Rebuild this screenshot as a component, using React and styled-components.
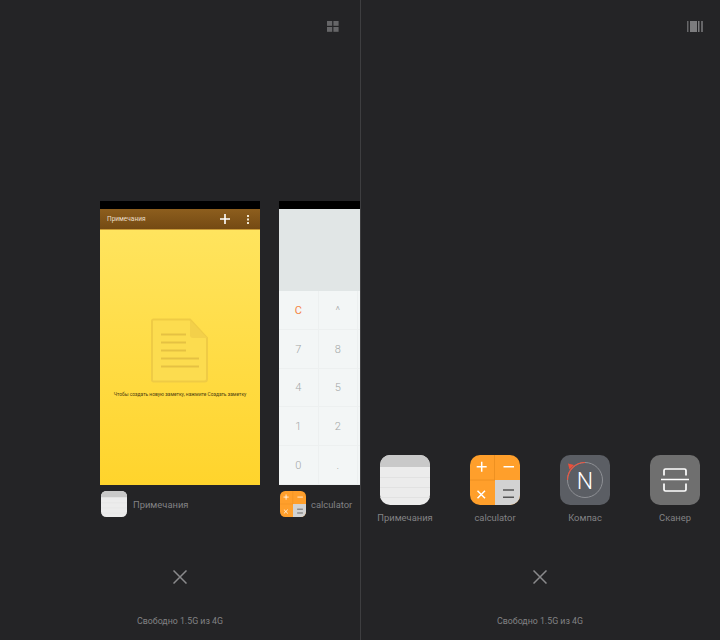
import React from "react";
import styled, { createGlobalStyle } from "styled-components";

const Global = createGlobalStyle`
  html, body { margin: 0; padding: 0; background: #242426; }
  body { font-family: Roboto, "Liberation Sans", sans-serif; }
`;

const Screen = styled.div`
  display: flex;
  width: 720px;
  height: 640px;
  overflow: hidden;
  background: #242426;
`;

const Panel = styled.section`
  position: relative;
  display: flex;
  flex-direction: column;
  width: 360px;
  height: 640px;
  flex: none;
  overflow: hidden;
  box-shadow: ${(p) => (p.$divided ? "inset 1px 0 0 #3e3e40" : "none")};
`;

const TopBar = styled.div`
  display: flex;
  justify-content: flex-end;
  align-items: flex-start;
  height: 21px;
  padding: 21px ${(p) => p.$inset}px 0 0;
  color: #666668;
  svg { display: block; }
`;

const Carousel = styled.div`
  display: flex;
  gap: 19px;
  margin-top: 159px;
  padding-left: 100px;
`;

const Task = styled.div`
  display: flex;
  flex-direction: column;
  flex: none;
  width: 160px;
`;

const Thumb = styled.div`
  display: flex;
  flex-direction: column;
  height: 284px;
  overflow: hidden;
`;

const StatusStrip = styled.div`
  height: 8px;
  background: #000;
  flex: none;
`;

const NoteHeader = styled.div`
  box-sizing: border-box;
  display: flex;
  align-items: center;
  height: 21px;
  padding: 0 11px 0 7px;
  flex: none;
  background: linear-gradient(#8d5e1d, #744a13);
  color: #eadfca;
  font-size: 6.5px;
  border-bottom: 1px solid #c99a35;
`;

const NoteTitle = styled.span`
  flex: 1;
`;

const NoteActions = styled.div`
  display: flex;
  align-items: center;
  gap: 17px;
  svg { display: block; }
`;

const NoteBody = styled.div`
  flex: 1;
  display: flex;
  flex-direction: column;
  align-items: center;
  padding-top: 88px;
  background: linear-gradient(#ffe45e, #ffd42c);
`;

const NoteHint = styled.div`
  margin-top: 8px;
  font-size: 4.9px;
  line-height: 7px;
  color: #4e3f10;
  white-space: nowrap;
`;

const CalcDisplay = styled.div`
  height: 82px;
  flex: none;
  background: #e1e6e6;
`;

const Keypad = styled.div`
  flex: 1;
  display: grid;
  grid-template-columns: repeat(4, 39.5px);
  grid-auto-rows: 1fr;
  background: #f3f6f6;
`;

const Key = styled.div`
  display: flex;
  align-items: center;
  justify-content: center;
  padding-top: 1px;
  font-size: 11px;
  font-weight: ${(p) => (p.$accent ? 400 : 300)};
  color: ${(p) => (p.$accent ? "#f58445" : "#a3a7a7")};
  border-right: 1px solid #edf0f0;
  border-bottom: 1px solid #edf0f0;
`;

const Caption = styled.div`
  display: flex;
  align-items: center;
  gap: ${(p) => p.$gap}px;
  margin-top: 6px;
  padding-left: 1px;
  height: 26px;
  color: #828284;
  font-size: 9.4px;
  white-space: nowrap;
  svg { display: block; flex: none; }
`;

const AppGrid = styled.div`
  display: grid;
  grid-template-columns: repeat(4, 90px);
  margin-top: 413px;
`;

const AppItem = styled.div`
  display: flex;
  flex-direction: column;
  align-items: center;
  gap: 7px;
  color: #828284;
  font-size: 9.4px;
  line-height: 12px;
  svg { display: block; }
`;

const Footer = styled.footer`
  position: absolute;
  left: 0;
  right: 0;
  bottom: 13px;
  display: flex;
  flex-direction: column;
  align-items: center;
  gap: 31px;
  color: #828284;
  font-size: 8.8px;
  line-height: 12px;
  svg { display: block; }
`;

const GridIcon = () => (
  <svg width="12" height="11" viewBox="0 0 12 11" fill="currentColor">
    <rect x="0" y="0" width="5.2" height="4.8" />
    <rect x="6.4" y="0" width="5.2" height="4.8" />
    <rect x="0" y="6" width="5.2" height="4.8" />
    <rect x="6.4" y="6" width="5.2" height="4.8" />
  </svg>
);

const StackIcon = () => (
  <svg width="16" height="11" viewBox="0 0 16 11" fill="currentColor">
    <rect x="0" y="0" width="1.5" height="11" />
    <rect x="3" y="0" width="7" height="11" fill="#7c7c7e" />
    <rect x="11" y="0" width="1.500" height="11" fill="#7c7c7e" />
    <rect x="14" y="0" width="2" height="11" />
  </svg>
);

const PlusIcon = () => (
  <svg width="10" height="10" viewBox="0 0 10 10" stroke="#fff" strokeWidth="1.6">
    <path d="M0 5h10M5 0v10" />
  </svg>
);

const MoreIcon = () => (
  <svg width="2" height="9" viewBox="0 0 2 9" fill="#efe6d2">
    <rect y="0" width="2" height="2" />
    <rect y="3.5" width="2" height="2" />
    <rect y="7" width="2" height="2" />
  </svg>
);

const DocIcon = () => (
  <svg width="58" height="65" viewBox="0 0 58 65" fill="none">
    <path
      d="M2.5 1.5H39L56 20v41a2.500 2.500 0 0 1-2.500 2.500h-51A1.500 1.500 0 0 1 1 62V3a1.500 1.500 0 0 1 1.500-1.500z"
      fill="#fcdc4f"
      stroke="#efcb45"
      strokeWidth="2"
    />
    <path d="M39 2v15a3 3 0 0 0 3 3h14z" fill="#f3d04a" />
    <path
      d="M10 16.500h25M10 24.500h25M10 32.500h25M10 40.500h38M10 48.500h38"
      stroke="#e5c143"
      strokeWidth="2"
    />
  </svg>
);

const NotesApp = ({ size }) => (
  <svg width={size} height={size} viewBox="0 0 50 50">
    <defs>
      <clipPath id={`notes-${size}`}>
        <rect width="50" height="50" rx="10" />
      </clipPath>
    </defs>
    <g clipPath={`url(#notes-${size})`}>
      <rect width="50" height="50" fill="#ececec" />
      <rect width="50" height="12" fill="#c9c9c9" />
      <path d="M0 22.500h50M0 32.500h50M0 42.500h50" stroke="#e2e2e2" strokeWidth="1" />
    </g>
  </svg>
);

const CalcApp = ({ size }) => (
  <svg width={size} height={size} viewBox="0 0 50 50">
    <defs>
      <clipPath id={`calc-${size}`}>
        <rect width="50" height="50" rx="10" />
      </clipPath>
    </defs>
    <g clipPath={`url(#calc-${size})`}>
      <rect width="50" height="50" fill="#ff9f2b" />
      <rect x="25" y="25" width="25" height="25" fill="#d2d2d2" />
      <path d="M24.500 0v25M0 25h25" stroke="#ea8e20" strokeWidth="0.800" />
      <path d="M6.700 11.700h10M11.700 6.700v10M33.500 11.700h10.500" stroke="#fff" strokeWidth="1.500" />
      <path d="M7.500 35.700l7.500 7.500M15 35.700l-7.500 7.500" stroke="#fff" strokeWidth="1.500" />
      <path d="M33 35h11M33 42.300h11" stroke="#555" strokeWidth="1.600" />
    </g>
  </svg>
);

const CompassApp = () => (
  <svg width="50" height="50" viewBox="0 0 50 50">
    <rect width="50" height="50" rx="10" fill="#5b5e64" />
    <circle cx="25" cy="25" r="17.500" fill="none" stroke="#8e9095" strokeWidth="1" />
    <path d="M7.500 25A17.500 17.500 0 0 1 25 7.500" fill="none" stroke="#ea5540" strokeWidth="1.200" />
    <path d="M8 8.500l6 1.500-4.500 4.500z" fill="#ee4f38" />
    <text x="25" y="33.500" textAnchor="middle" fontFamily="Roboto, sans-serif" fontWeight="300" fontSize="23" fill="#fff">N</text>
  </svg>
);

const ScannerApp = () => (
  <svg width="50" height="50" viewBox="0 0 50 50">
    <rect width="50" height="50" rx="10" fill="#6f6f6f" />
    <path d="M14 20.500V15.500a1.500 1.500 0 0 1 1.500-1.500h19a1.500 1.500 0 0 1 1.500 1.500v5M14 28.500v6a1.500 1.500 0 0 0 1.500 1.500h19a1.500 1.500 0 0 0 1.500-1.500v-6M11 24.500h28" fill="none" stroke="#fff" strokeWidth="1.700" />
  </svg>
);

const CloseIcon = () => (
  <svg width="14" height="14" viewBox="0 0 14 14" stroke="#8a8a8c" strokeWidth="1.500">
    <path d="M0.500 0.500l13 13M13.500 0.500l-13 13" />
  </svg>
);

const keys = ["C", "^", "", "", "7", "8", "", "", "4", "5", "", "", "1", "2", "", "", "0", ".", "", ""];

const apps = [
  { name: "Примечания", icon: <NotesApp size={50} /> },
  { name: "calculator", icon: <CalcApp size={50} /> },
  { name: "Компас", icon: <CompassApp /> },
  { name: "Сканер", icon: <ScannerApp /> },
];

const PanelFooter = () => (
  <Footer>
    <CloseIcon />
    <span>Свободно 1.5G из 4G</span>
  </Footer>
);

export default function App() {
  return (
    <Screen>
      <Global />
      <Panel>
        <TopBar $inset={21}>
          <GridIcon />
        </TopBar>
        <Carousel>
          <Task>
            <Thumb>
              <StatusStrip />
              <NoteHeader>
                <NoteTitle>Примечания</NoteTitle>
                <NoteActions>
                  <PlusIcon />
                  <MoreIcon />
                </NoteActions>
              </NoteHeader>
              <NoteBody>
                <DocIcon />
                <NoteHint>Чтобы создать новую заметку, нажмите Создать заметку</NoteHint>
              </NoteBody>
            </Thumb>
            <Caption $gap={6}>
              <NotesApp size={26} />
              Примечания
            </Caption>
          </Task>
          <Task>
            <Thumb>
              <StatusStrip />
              <CalcDisplay />
              <Keypad>
                {keys.map((k, i) => (
                  <Key key={i} $accent={k === "C"}>
                    {k}
                  </Key>
                ))}
              </Keypad>
            </Thumb>
            <Caption $gap={5}>
              <CalcApp size={26} />
              calculator
            </Caption>
          </Task>
        </Carousel>
        <PanelFooter />
      </Panel>
      <Panel $divided>
        <TopBar $inset={17}>
          <StackIcon />
        </TopBar>
        <AppGrid>
          {apps.map((a) => (
            <AppItem key={a.name}>
              {a.icon}
              {a.name}
            </AppItem>
          ))}
        </AppGrid>
        <PanelFooter />
      </Panel>
    </Screen>
  );
}
